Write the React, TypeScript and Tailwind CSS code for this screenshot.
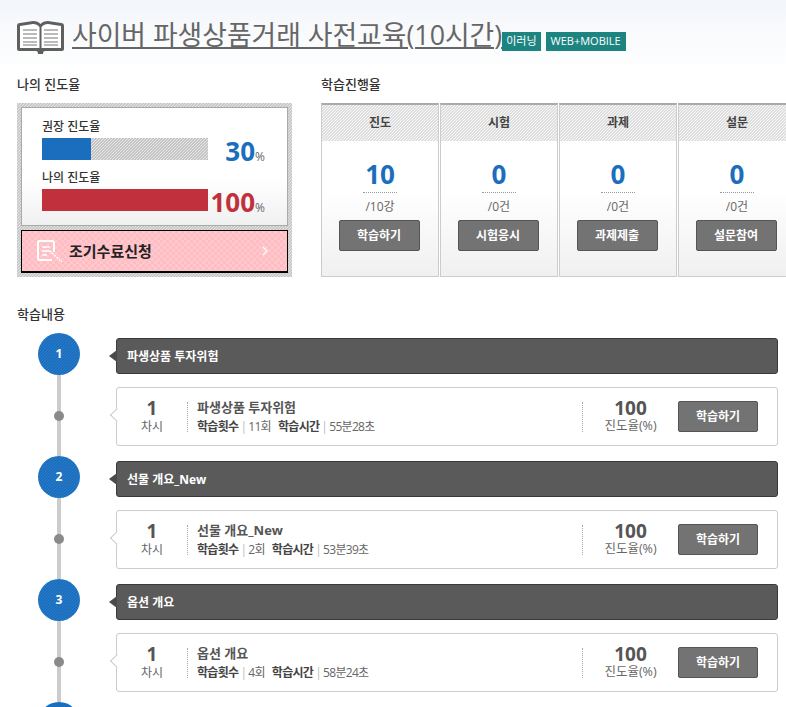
import React from "react";

const font = "font-['Open_Sans','Noto_Sans_CJK_KR',sans-serif]";

const steps = [
  { title: "진도", value: "10", total: "/10강", btn: "학습하기" },
  { title: "시험", value: "0", total: "/0건", btn: "시험응시" },
  { title: "과제", value: "0", total: "/0건", btn: "과제제출" },
  { title: "설문", value: "0", total: "/0건", btn: "설문참여" },
];

const lessons = [
  { no: 1, title: "파생상품 투자위험", count: "11회", time: "55분28초" },
  { no: 2, title: "선물 개요_New", count: "2회", time: "53분39초" },
  { no: 3, title: "옵션 개요", count: "4회", time: "58분24초" },
];

const BookIcon = () => (
  <svg width="47" height="33" viewBox="0 0 47 33" fill="none" className="-mb-[3px] shrink-0">
    <path d="M0 5 Q0 2 3 2 L16 0 Q21 0 23.500 3 Q26 0 31 0 L44 2 Q47 2 47 5 L47 28 Q47 30 45 30 L28 30 Q26 30 26 33 L21 33 Q21 30 19 30 L2 30 Q0 30 0 28 Z" fill="#5f5f5f" />
    <path d="M3 5 L16 3 Q20 3 22.500 6 L22.500 27 L3 27 Z" fill="#fff" />
    <path d="M44 5 L31 3 Q27 3 24.500 6 L24.500 27 L44 27 Z" fill="#fff" />
    <path d="M6 9H20M6 13H20M6 17H20M6 21H20M6 24H20M27 9H41M27 13H41M27 17H41M27 21H41M27 24H41" stroke="#777" strokeWidth="1.200" />
  </svg>
);

const NoteIcon = () => (
  <svg width="26" height="22" viewBox="0 0 26 22" fill="none">
    <path d="M15 20H2.500 Q1 20 1 18.500V2.500 Q1 1 2.500 1H15 Q17 1 17 3V12" stroke="#fff" strokeWidth="2" />
    <path d="M5 7H13M5 11H13M5 15H10" stroke="#fff" strokeWidth="1.500" />
    <path d="M13 11L25 22" stroke="#fff" strokeWidth="1.500" strokeDasharray="2 1" />
  </svg>
);

const Chevron = () => (
  <svg width="6" height="10" viewBox="0 0 6 10" fill="none">
    <path d="M1 1L5 5L1 9" stroke="#fff" strokeWidth="1.300" />
  </svg>
);

const GrayButton = ({ label }: { label: string }) => (
  <div className="flex h-[31px] w-[81px] items-center justify-center rounded-[2px] border border-[#555] bg-[#737373] text-[12px] font-bold text-white">
    {label}
  </div>
);

const StepCard = ({ title, value, total, btn }: (typeof steps)[number]) => (
  <div className="flex h-[174px] w-[118px] shrink-0 flex-col border border-t-2 border-[#ccc] border-t-[#aaa] bg-gradient-to-b from-white from-50% to-[#f0f0f0]">
    <div className="flex h-[36px] items-center justify-center bg-[linear-gradient(135deg,#dedede_25%,#f8f8f8_25%,#f8f8f8_50%,#dedede_50%,#dedede_75%,#f8f8f8_75%)] bg-[length:3px_3px] text-[12px] font-bold text-[#444]">
      {title}
    </div>
    <div className="mt-[15px] flex flex-col items-center">
      <div className="text-[26px] leading-[36px] font-bold text-[#1a6ebd]">{value}</div>
      <div className="h-0 w-[34px] border-t border-dotted border-[#999]" />
      <div className="mt-[5px] text-[12px] leading-[18px] text-[#666]">{total}</div>
      <div className="mt-[4px] -translate-x-[1px]">
        <GrayButton label={btn} />
      </div>
    </div>
  </div>
);

const ProgressRow = ({
  label,
  width,
  value,
  barClass,
  textClass,
}: {
  label: string;
  width: string;
  value: string;
  barClass: string;
  textClass: string;
}) => (
  <div>
    <div className="text-[12px] leading-[18px] font-medium text-[#333]">{label}</div>
    <div className="mt-[2px] flex h-[22px]">
      <div className="h-[22px] w-[166px] bg-[linear-gradient(135deg,#c4c4c4_25%,#e8e8e8_25%,#e8e8e8_50%,#c4c4c4_50%,#c4c4c4_75%,#e8e8e8_75%)] bg-[length:3px_3px]">
        <div className={`h-full ${width} ${barClass}`} />
      </div>
      <div className="flex h-[27px] w-[57px] items-baseline justify-end leading-none">
        <span className={`text-[26px] font-bold ${textClass}`}>{value}</span>
        <span className="text-[12px] text-[#666]">%</span>
      </div>
    </div>
  </div>
);

const LessonGroup = ({ no, title, count, time }: (typeof lessons)[number]) => (
  <div className="flex h-[123px] pl-[38px]">
    <div className="flex w-[42px] shrink-0 flex-col items-center">
      <div className="flex h-[42px] w-[42px] items-center justify-center rounded-full bg-[linear-gradient(135deg,#1a6ebd_25%,#2a7cc8_25%,#2a7cc8_50%,#1a6ebd_50%,#1a6ebd_75%,#2a7cc8_75%)] bg-[length:3px_3px] text-[12px] font-bold text-white">
        {no}
      </div>
      <div className="relative flex h-[81px] w-[4px] items-center justify-center bg-[#ccc]">
        <div className="absolute h-[10px] w-[10px] rounded-full bg-[#8a8a8a]" />
      </div>
    </div>
    <div className="ml-[36px] w-[662px] pt-[5px]">
      <div className="relative flex h-[36px] items-center rounded-[3px] border border-[#3a3a3a] bg-[#5a5a5a] pt-[2px] pl-[10px] text-[12px] font-bold text-white">
        <div className="absolute top-[11px] left-[-8px] h-0 w-0 border-y-[6px] border-r-[8px] border-y-transparent border-r-[#4a4a4a]" />
        {title}
      </div>
      <div className="relative mt-[13px] flex h-[59px] items-center rounded-[3px] border border-[#ccc] bg-white">
        <div className="absolute top-[22px] left-[-5px] h-[10px] w-[10px] rotate-45 border-b border-l border-[#ccc] bg-white" />
        <div className="w-[70px] shrink-0 text-center">
          <div className="text-[19px] leading-[20px] font-bold text-[#555]">1</div>
          <div className="text-[12px] leading-[18px] text-[#666]">차시</div>
        </div>
        <div className="h-[30px] w-[395px] shrink-0 border-l border-dotted border-[#aaa] pl-[9px]">
          <div className="-mt-[3px] text-[13px] leading-[16px] font-bold text-[#555]">{title}</div>
          <div className="mt-[4px] flex items-center text-[12px] leading-[16px] tracking-[-0.7px] text-[#666]">
            <span className="font-bold text-[#444]">학습횟수</span>
            <span className="mx-[2px] text-[#bbb]">|</span>
            <span>{count}</span>
            <span className="ml-[7px] font-bold text-[#444]">학습시간</span>
            <span className="mx-[2px] text-[#bbb]">|</span>
            <span>{time}</span>
          </div>
        </div>
        <div className="h-[30px] w-[96px] shrink-0 border-l border-dotted border-[#aaa] text-center">
          <div className="-mt-[3px] text-[19px] leading-[18px] font-bold text-[#555]">100</div>
          <div className="text-[12.500px] leading-[18px] text-[#666]">진도율(%)</div>
        </div>
        <div className="shrink-0 [&>div]:w-[80px]">
          <GrayButton label="학습하기" />
        </div>
      </div>
    </div>
  </div>
);

export default function App() {
  return (
    <div className={`h-[707px] w-[786px] overflow-hidden bg-white ${font}`}>
      <div className="h-[72px] bg-gradient-to-b from-[#f3f6fa] to-white px-[17px] pt-[19px]">
        <div className="flex items-end">
          <BookIcon />
          <a className="ml-[8px] text-[26.800px] leading-[32px] whitespace-nowrap text-[#666] underline decoration-2 underline-offset-2">
            사이버 파생상품거래 사전교육(10시간)
          </a>
          <span className="flex h-[19px] items-center bg-[#1e8480] px-[4px] text-[11px] text-white">이러닝</span>
          <span className="ml-[5px] flex h-[19px] items-center bg-[#1e8480] px-[5px] text-[11px] whitespace-nowrap text-white">
            WEB+MOBILE
          </span>
        </div>
      </div>

      <div className="flex px-[17px]">
        <div className="w-[275px] shrink-0">
          <h3 className="h-[31px] pt-[3px] text-[13px] font-medium text-[#333]">나의 진도율</h3>
          <div className="h-[174px] bg-[linear-gradient(135deg,#c8c8c8_25%,#e4e4e4_25%,#e4e4e4_50%,#c8c8c8_50%,#c8c8c8_75%,#e4e4e4_75%)] bg-[length:3px_3px] p-[4px]">
            <div className="flex h-[119px] flex-col gap-[9px] border border-[#aaa] bg-gradient-to-b from-white from-60% to-[#f0f0f0] pt-[10px] pl-[20px]">
              <ProgressRow label="권장 진도율" width="w-[49px]" value="30" barClass="bg-[#1a6ebd]" textClass="text-[#1a6ebd]" />
              <ProgressRow label="나의 진도율" width="w-full" value="100" barClass="bg-[#c1313d]" textClass="text-[#c1313d]" />
            </div>
            <div className="mt-[4px] flex h-[43px] items-center border border-b-2 border-black bg-[conic-gradient(#ffbcc3_25%,#ffc8cd_25%,#ffc8cd_50%,#ffbcc3_50%,#ffbcc3_75%,#ffc8cd_75%)] bg-[length:6px_6px] pr-[19px] pl-[15px]">
              <NoteIcon />
              <span className="ml-[6px] flex-1 text-[15px] font-bold text-[#222]">조기수료신청</span>
              <Chevron />
            </div>
          </div>
        </div>
        <div className="ml-[29px] min-w-0 flex-1">
          <h3 className="h-[31px] pt-[3px] text-[13px] font-medium text-[#333]">학습진행율</h3>
          <div className="flex gap-[1px]">
            {steps.map((s) => (
              <StepCard key={s.title} {...s} />
            ))}
          </div>
        </div>
      </div>

      <h3 className="mt-[28px] h-[28px] pl-[17px] text-[13px] font-medium text-[#333]">학습내용</h3>
      {lessons.map((l) => (
        <LessonGroup key={l.no} {...l} />
      ))}
      <div className="ml-[38px] h-[42px] w-[42px] rounded-full bg-[#1a6ebd]" />
    </div>
  );
}
